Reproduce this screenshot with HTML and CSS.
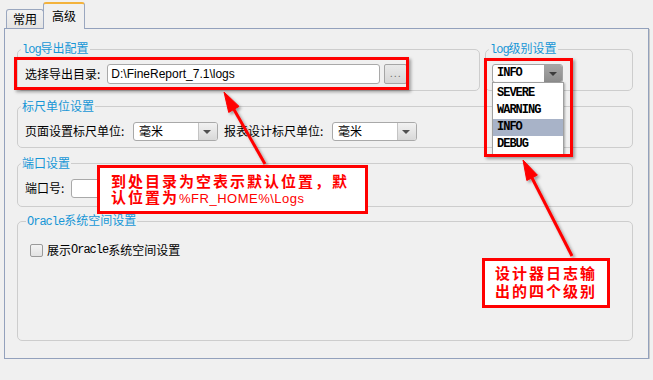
FILE: index.html
```html
<!DOCTYPE html>
<html lang="zh-CN">
<head>
  <meta charset="UTF-8">
  <title>高级设置</title>
  <link rel="stylesheet" href="styles.css">
</head>
<body>
  <div class="dialog">
    <div class="tabs">
      <div class="tab">常用</div>
      <div class="tab active">高级</div>
    </div>
    <div class="panel">
      <div class="top-row">
        <fieldset class="group log-export">
          <legend><span class="mono">log</span>导出配置</legend>
          <div class="field">
            <label>选择导出目录:</label>
            <input class="text path" value="D:\FineReport_7.1\logs">
            <button class="browse">...</button>
          </div>
        </fieldset>
        <fieldset class="group log-level">
          <legend><span class="mono">log</span>级别设置</legend>
          <div class="combo open">
            <span class="combo-value mono">INFO</span>
            <span class="combo-arrow"></span>
            <ul class="combo-list mono">
              <li>SEVERE</li>
              <li>WARNING</li>
              <li class="selected">INFO</li>
              <li>DEBUG</li>
            </ul>
          </div>
        </fieldset>
      </div>

      <fieldset class="group ruler">
        <legend>标尺单位设置</legend>
        <div class="field">
          <label class="unit-label">页面设置标尺单位:</label>
          <div class="select"><span>毫米</span><span class="select-arrow"></span></div>
          <label class="unit-label second">报表设计标尺单位:</label>
          <div class="select"><span>毫米</span><span class="select-arrow"></span></div>
        </div>
      </fieldset>

      <fieldset class="group port">
        <legend>端口设置</legend>
        <div class="field">
          <label>端口号:</label>
          <input class="text port-input" value="">
        </div>
      </fieldset>

      <fieldset class="group oracle">
        <legend><span class="mono">Oracle</span>系统空间设置</legend>
        <label class="check"><span class="box"></span>展示<span class="mono">Oracle</span>系统空间设置</label>
      </fieldset>
    </div>
  </div>

  <!-- пометки поверх скриншота -->
  <div class="mark mark-dir"></div>
  <div class="mark mark-level"></div>
  <svg class="arrows" width="653" height="380">
    <defs>
      <filter id="shadow" x="-30%" y="-30%" width="160%" height="160%">
        <feDropShadow dx="2" dy="2" stdDeviation="1.5" flood-color="#000" flood-opacity="0.35"/>
      </filter>
    </defs>
    <g fill="#f00" stroke="#f00" filter="url(#shadow)">
      <line x1="265" y1="164" x2="232" y2="106" stroke-width="3"/>
      <polygon points="224,92 228.7,112.4 239.1,106.4" stroke-width="1"/>
      <line x1="572" y1="256" x2="530" y2="174" stroke-width="3"/>
      <polygon points="523,160 526.8,180.5 537.4,175.1" stroke-width="1"/>
    </g>
  </svg>
  <div class="note note-dir">到处目录为空表示默认位置，默<br>认位置为<span class="latin">%FR_HOME%\Logs</span></div>
  <div class="note note-level">设计器日志输<br>出的四个级别</div>
</body>
</html>
```

FILE: styles.css
```css
body {
  margin: 0;
  background: #f0f0f0;
  font-family: "Noto Sans CJK SC", sans-serif;
  font-size: 12px;
  color: #000;
}

.mono {
  font-family: "Liberation Mono", "Courier New", monospace;
  letter-spacing: -1px;
}

.dialog {
  padding: 4px 0 0 4px;
}

.tabs {
  display: flex;
  align-items: flex-end;
  height: 24px;
  padding-left: 2px;
}
.tab {
  height: 18px;
  width: 36px;
  border: 1px solid #9aa7bf;
  border-bottom: none;
  border-radius: 3px 3px 0 0;
  background: linear-gradient(#f2f2f2, #e4e4e4);
  display: flex;
  align-items: center;
  justify-content: center;
  line-height: 14px;
}
.tab.active {
  position: relative;
  z-index: 1;
  height: 23px;
  width: 40px;
  margin-left: -1px;
  margin-bottom: -1px;
  border-top: 2px solid #f3b23c;
  background: #f0f0f0;
  padding-bottom: 2px;
}

.panel {
  box-sizing: border-box;
  width: 645px;
  height: 331px;
  border: 1px solid #93a1bc;
  box-shadow: 1px 1px 0 #c9c9c9;
  padding: 12px 15px 17px 12px;
  display: flex;
  flex-direction: column;
}

.group {
  margin: 0;
  border: 1px solid #cdcdcd;
  border-radius: 5px;
  padding: 7px 7px 6px 7px;
  min-width: 0;
}
.group legend {
  padding: 0 1px;
  margin-left: -4px;
  color: #1796d6;
  line-height: 14px;
}

.top-row {
  display: flex;
  gap: 5px;
}
.log-export { width: 463px; box-sizing: border-box; }
.log-level { flex: 1; }

.field {
  display: flex;
  align-items: center;
  height: 20px;
}
.field label { line-height: 14px; }

.text {
  box-sizing: border-box;
  height: 20px;
  border: 1px solid #a9a9a9;
  border-radius: 3px;
  background: #fff;
  font-family: "Liberation Sans", sans-serif;
  font-size: 12px;
  padding: 0 3px;
  margin: 0;
}
.path {
  width: 273px;
  margin-left: 7px;
}
.browse {
  box-sizing: border-box;
  width: 23px;
  height: 20px;
  margin-left: 4px;
  padding: 0 0 3px;
  border: 1px solid #a5a5a5;
  border-radius: 2px;
  background: linear-gradient(#e9e9e9, #d6d6d6);
  color: #707070;
  font-family: "Liberation Sans", sans-serif;
  font-size: 11px;
  letter-spacing: 1px;
}

.combo {
  position: relative;
  box-sizing: border-box;
  width: 71px;
  height: 19px;
  border: 1px solid #a3a3a3;
  border-radius: 3px;
  background: #fff;
  display: flex;
  margin-left: -1px;
}
.combo-value {
  flex: 1;
  padding-left: 4px;
  line-height: 17px;
  font-weight: bold;
}
.combo-arrow {
  width: 18px;
  background: linear-gradient(#a6a6a6, #8c8c8c);
  border-radius: 0 2px 2px 0;
  position: relative;
}
.combo-arrow::after,
.select-arrow::after {
  content: "";
  position: absolute;
  left: 5px;
  top: 7px;
  border-left: 4px solid transparent;
  border-right: 4px solid transparent;
  border-top: 4px solid #3c3c3c;
}
.combo-list {
  position: absolute;
  left: -1px;
  top: 17px;
  width: 72px;
  margin: 0;
  padding: 2px 0 1px;
  list-style: none;
  background: #fff;
  border: 1px solid #a0a0a0;
  box-shadow: 1px 1px 2px rgba(0,0,0,0.3);
  box-sizing: border-box;
}
.combo-list li {
  height: 17px;
  line-height: 17px;
  padding-left: 4px;
  font-weight: bold;
}
.combo-list li.selected {
  background: #a8b3c8;
}

.ruler { margin-top: 8px; padding-top: 8px; }
.unit-label { width: 103px; }
.select {
  box-sizing: border-box;
  width: 85px;
  height: 19px;
  margin-left: 5px;
  border: 1px solid #a9a9a9;
  border-radius: 3px;
  background: #fff;
  display: flex;
  align-items: center;
}
.select span:first-child {
  flex: 1;
  padding-left: 5px;
  line-height: 14px;
}
.select-arrow {
  position: relative;
  width: 18px;
  height: 17px;
  border-left: 1px solid #c4c4c4;
  background: linear-gradient(#f2f2f2, #d8d8d8);
  border-radius: 0 2px 2px 0;
}
.select-arrow::after { left: 4px; top: 7px; border-top-color: #505050; }
.field .second { margin-left: 6px; }

.port { margin-top: 8px; padding-top: 8px; padding-bottom: 8px; }
.port-input {
  width: 130px;
  height: 19px;
  margin-left: 7px;
}

.oracle {
  margin-top: 6px;
  flex: 1;
  padding-top: 13px;
  padding-left: 12px;
}
.check {
  display: flex;
  align-items: center;
  height: 16px;
  line-height: 14px;
}
.check .box {
  width: 11px;
  height: 11px;
  border: 1px solid #9a9a9a;
  border-radius: 2px;
  background: linear-gradient(#f4f4f4, #e2e2e2);
  margin-right: 4px;
}

.mark {
  position: absolute;
  box-sizing: border-box;
  border: 3px solid #f00;
  box-shadow: 2px 2px 3px rgba(0,0,0,0.35);
}
.mark-dir { left: 14px; top: 57px; width: 395px; height: 33px; }
.mark-level { left: 484px; top: 58px; width: 89px; height: 99px; }

.arrows {
  position: absolute;
  left: 0;
  top: 0;
  pointer-events: none;
}

.note {
  position: absolute;
  box-sizing: border-box;
  background: #fff;
  border: 3px solid #f00;
  color: #f00;
  font-weight: bold;
  font-size: 15px;
  letter-spacing: 2px;
}
.note-dir {
  left: 97px;
  top: 165px;
  width: 271px;
  height: 49px;
  padding: 5px 0 0 11px;
  line-height: 16px;
}
.note-dir .latin {
  font-family: "Liberation Sans", sans-serif;
  font-weight: normal;
  font-size: 13px;
  letter-spacing: 0.5px;
}
.note-level {
  left: 482px;
  top: 258px;
  width: 128px;
  height: 50px;
  padding-top: 3px;
  line-height: 18px;
  text-align: center;
}
```
